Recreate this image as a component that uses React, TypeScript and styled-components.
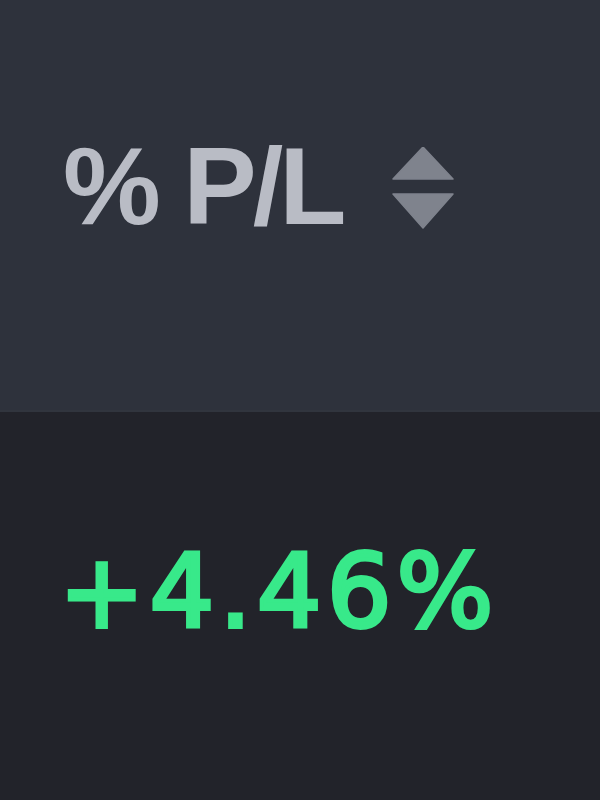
import React from "react";
import styled, { createGlobalStyle } from "styled-components";

const Global = createGlobalStyle`
  html, body { margin: 0; padding: 0; background: #22232a; }
  body { width: 600px; height: 800px; overflow: hidden; }
`;

const Table = styled.div`
  width: 600px;
  height: 800px;
  display: flex;
  flex-direction: column;
`;

const HeaderCell = styled.div`
  height: 412px;
  box-sizing: border-box;
  background: #2e323c;
  border-bottom: 2px solid #31353e;
  display: flex;
  align-items: center;
  gap: 49px;
  padding: 0 0 38px 63px;
`;

const HeaderLabel = styled.span`
  font-family: "Liberation Sans", Arial, sans-serif;
  font-weight: 700;
  font-size: 110px;
  line-height: 1;
  color: #b9bcc5;
  letter-spacing: -4px;
`;

const SortIcon = styled.svg`
  width: 62px;
  height: 82px;
  flex: none;
  margin-top: 4px;
`;

const BodyCell = styled.div`
  flex: 1;
  background: #22232a;
  display: flex;
  align-items: center;
  padding: 0 0 28px 59px;
`;

const Value = styled.span<{ $positive: boolean }>`
  font-family: "DejaVu Sans", Verdana, sans-serif;
  font-weight: 400;
  font-size: 102px;
  line-height: 1;
  letter-spacing: 5px;
  color: ${(p) => (p.$positive ? "#38e98a" : "#f0556a")};
  -webkit-text-stroke: 4px ${(p) => (p.$positive ? "#38e98a" : "#f0556a")};
`;

export default function App() {
  const pct = 4.46;
  return (
    <>
      <Global />
      <Table>
        <HeaderCell>
          <HeaderLabel>% P/L</HeaderLabel>
          <SortIcon viewBox="0 0 62 82">
            <polygon points="31,0 61,32 1,32" fill="#7f838d" strokeLinejoin="round" stroke="#7f838d" strokeWidth="1.5" />
            <polygon points="1,47 61,47 31,81" fill="#7f838d" strokeLinejoin="round" stroke="#7f838d" strokeWidth="1.5" />
          </SortIcon>
        </HeaderCell>
        <BodyCell>
          <Value $positive={pct >= 0}>
            {pct >= 0 ? "+" : ""}
            {pct.toFixed(2)}%
          </Value>
        </BodyCell>
      </Table>
    </>
  );
}
